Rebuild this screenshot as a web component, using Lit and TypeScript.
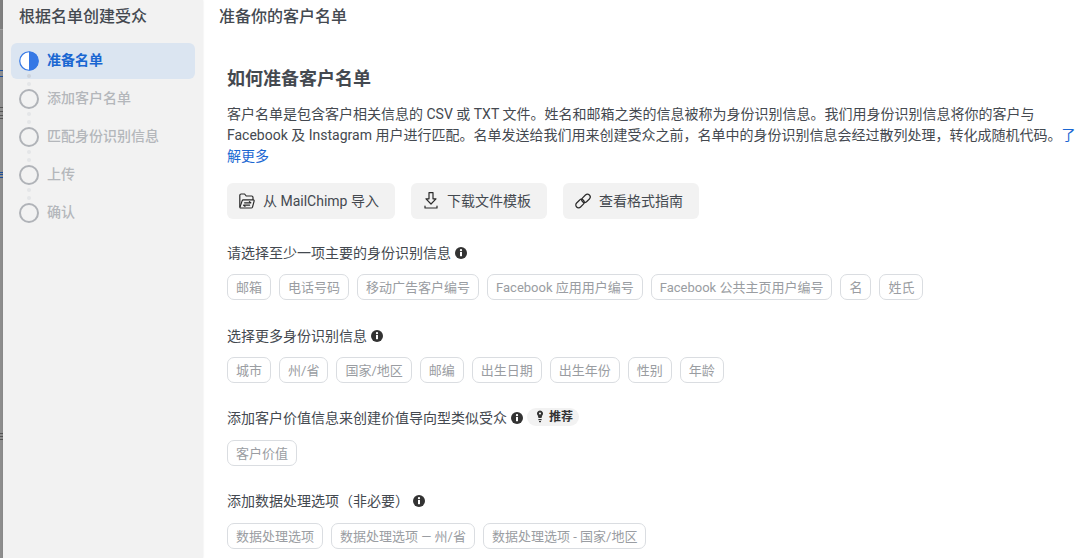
import { LitElement, html, css, svg } from "lit";
import { customElement } from "lit/decorators.js";

const info = html`<svg class="info" viewBox="0 0 12 12" width="12" height="12"><circle cx="6" cy="6" r="6" fill="#333"/><rect x="5" y="5" width="2" height="4.2" fill="#fff"/><circle cx="6" cy="3.2" r="1.15" fill="#fff"/></svg>`;

const folder = svg`<path d="M.8 13.6V2.4C.8 1.6 1.4 1 2.2 1h3.4l1.6 2h5.4c.8 0 1.4.6 1.4 1.4V6.5"/><path d="M.9 14.4c.2.4.6.6 1 .6h10.3c.6 0 1.1-.4 1.3-.9l1.6-6c.2-.7-.3-1.2-.9-1.2H4.4c-.6 0-1.1.4-1.3 1L.9 14.4z"/><path d="M5.6 9.8h6.2l-1.4-1.2M10.6 12.2H4.6l1.4 1.2"/>`;
const download = svg`<path d="M6 -.4h4v6.2h3L8 11 3 5.8h3z"/><path d="M2 13v2h12v-2" />`;
const link = svg`<rect x="6.2" y="2.6" width="9.6" height="5.6" rx="2.8" transform="rotate(-45 11 5.4)"/><rect x="0.2" y="7.8" width="9.6" height="5.6" rx="2.8" transform="rotate(-45 5 10.6)"/>`;

const steps = ["准备名单", "添加客户名单", "匹配身份识别信息", "上传", "确认"];
const frags: [number, string][] = [
  [70, "blue"], [76, "blue"], [107, "dark"], [111, "dark"], [115, "dark"], [118, "dark"],
  [172, "blue"], [174, "blue"], [177, "blue"], [433, "dark"], [436, "dark"], [439, "dark"],
];

@customElement("app-root")
export class AppRoot extends LitElement {
  static styles = css`
    :host {
      display: flex;
      width: 1077px;
      height: 558px;
      overflow: hidden;
      background: #fff;
      font-family: Roboto, "Noto Sans CJK SC", sans-serif;
      font-size: 14px;
      color: #444950;
    }
    .edge { width: 3px; flex: none; background: #8e8e8e; position: relative; }
    .edge-top { height: 29px; background: #808080; border-bottom: 1px solid #a0a0a0; }
    .frag { position: absolute; left: 0; width: 3px; height: 1px; }
    .blue { background: #1c4f9c; }
    .dark { background: #555; }
    .side {
      width: 200px;
      flex: none;
      box-sizing: border-box;
      background: #f2f2f2;
      box-shadow: 0 0 2px rgba(0, 0, 0, 0.1);
      padding: 6px 8px 0;
      position: relative;
    }
    .side h1 { margin: 0 0 15px 8px; font-size: 16px; line-height: 22px; font-weight: 500; color: #444950; }
    .step {
      height: 36px;
      display: flex;
      align-items: center;
      gap: 8px;
      padding: 0 8px;
      margin-bottom: 2px;
      border-radius: 6px;
      font-weight: 500;
      color: #b4b7bb;
      position: relative;
    }
    .step span { margin-bottom: 4px; }
    .step.on { background: #dbe5f1; color: #1a67d2; font-weight: 700; }
    .step svg.c { flex: none; }
    .dots { position: absolute; left: 16px; bottom: -7px; width: 4px; display: flex; flex-direction: column; gap: 4px; z-index: 1; }
    .dots i { width: 4px; height: 4px; border-radius: 50%; background: #e4e6e8; }
    .step.on .dots i:first-child { background: #ccd3dc; }
    .main { flex: 1; min-width: 0; }
    .top { padding: 6px 16px 0; font-size: 16px; line-height: 22px; font-weight: 500; color: #444950; height: 26px; }
    .body { padding: 35px 0 0 24px; }
    h2 { margin: 0; font-size: 18px; line-height: 24px; font-weight: 700; color: #444950; }
    p { margin: 13px 0 0; width: 850px; line-height: 21px; }
    a { color: #1a67d2; text-decoration: none; }
    .btns { display: flex; gap: 16px; margin-top: 16px; }
    .btn {
      height: 36px;
      box-sizing: border-box;
      display: flex;
      align-items: center;
      gap: 8px;
      padding: 0 16px 0 12px;
      background: #f2f2f2;
      border-radius: 6px;
    }
    .btn span { margin-bottom: 2px; }
    .btn svg { fill: none; stroke: #2b2b2b; stroke-width: 1.2; stroke-linejoin: round; stroke-linecap: round; overflow: visible; flex: none; }
    .label { display: flex; align-items: center; gap: 4px; line-height: 20px; }
    .info { flex: none; }
    .chips { display: flex; gap: 8px; margin-top: 11px; }
    .chip {
      height: 26px;
      box-sizing: border-box;
      display: flex;
      align-items: center;
      padding: 0 8px 2px;
      border: 1px solid #dadde1;
      border-radius: 7px;
      font-size: 13px;
      color: #9a9da2;
      white-space: nowrap;
    }
    .s1 { margin-top: 24px; }
    .s2 { margin-top: 26px; }
    .s3 { margin-top: 25px; }
    .s3 + .chips { margin-top: 12px; }
    .pill {
      display: flex;
      align-items: center;
      gap: 6px;
      height: 18px;
      padding: 0 6px 0 10px;
      margin-top: -2px;
      background: #f2f2f2;
      border-radius: 9px;
      font-size: 12px;
      font-weight: 700;
      color: #333;
    }
  `;

  private chips(items: string[]) {
    return html`<div class="chips">${items.map((t) => html`<div class="chip">${t}</div>`)}</div>`;
  }

  render() {
    return html`
      <div class="edge">
        <div class="edge-top"></div>
        ${frags.map(([y, c]) => html`<div class="frag ${c}" style="top:${y}px"></div>`)}
      </div>
      <aside class="side">
        <h1>根据名单创建受众</h1>
        ${steps.map(
          (s, i) => html`<div class="step ${i === 0 ? "on" : ""}">
            ${i === 0
              ? html`<svg class="c" width="20" height="20" viewBox="0 0 20 20"><circle cx="10" cy="10" r="9.25" fill="#fff" stroke="#3578e5" stroke-width="1.2"/><path d="M10 .5a9.5 9.5 0 0 1 0 19z" fill="#3578e5"/></svg>`
              : html`<svg class="c" width="20" height="20" viewBox="0 0 20 20"><circle cx="10" cy="10" r="9" fill="none" stroke="#b0b3b8" stroke-width="2"/></svg>`}
            <span>${s}</span>
            ${i < 4 ? html`<div class="dots"><i></i><i></i></div>` : ""}
          </div>`
        )}
      </aside>
      <main class="main">
        <div class="top">准备你的客户名单</div>
        <div class="body">
          <h2>如何准备客户名单</h2>
          <p>客户名单是包含客户相关信息的 CSV 或 TXT 文件。姓名和邮箱之类的信息被称为身份识别信息。我们用身份识别信息将你的客户与 Facebook 及 Instagram 用户进行匹配。名单发送给我们用来创建受众之前，名单中的身份识别信息会经过散列处理，转化成随机代码。<a>了解更多</a></p>
          <div class="btns">
            <div class="btn"><svg width="16" height="16" viewBox="0 0 16 16">${folder}</svg><span>从 MailChimp 导入</span></div>
            <div class="btn"><svg width="16" height="16" viewBox="0 0 16 16">${download}</svg><span>下载文件模板</span></div>
            <div class="btn"><svg width="16" height="16" viewBox="0 0 16 16">${link}</svg><span>查看格式指南</span></div>
          </div>
          <div class="label s1">请选择至少一项主要的身份识别信息 ${info}</div>
          ${this.chips(["邮箱", "电话号码", "移动广告客户编号", "Facebook 应用用户编号", "Facebook 公共主页用户编号", "名", "姓氏"])}
          <div class="label s2">选择更多身份识别信息 ${info}</div>
          ${this.chips(["城市", "州/省", "国家/地区", "邮编", "出生日期", "出生年份", "性别", "年龄"])}
          <div class="label s3">添加客户价值信息来创建价值导向型类似受众 ${info}
            <div class="pill"><svg width="6" height="14" viewBox="0 0 6 14"><path d="M3 .5a3 3 0 0 0-2.2 5l.7 2.5h3l.7-2.5A3 3 0 0 0 3 .5z" fill="#333"/><rect x="1.4" y="9" width="3.2" height="1.2" fill="#333"/><rect x="2" y="11" width="2" height="1.2" fill="#333"/><circle cx="3" cy="3.6" r="1" fill="#fff"/></svg>推荐</div>
          </div>
          ${this.chips(["客户价值"])}
          <div class="label s2 s3">添加数据处理选项（非必要） ${info}</div>
          ${this.chips(["数据处理选项", "数据处理选项 — 州/省", "数据处理选项 - 国家/地区"])}
        </div>
      </main>
    `;
  }
}
